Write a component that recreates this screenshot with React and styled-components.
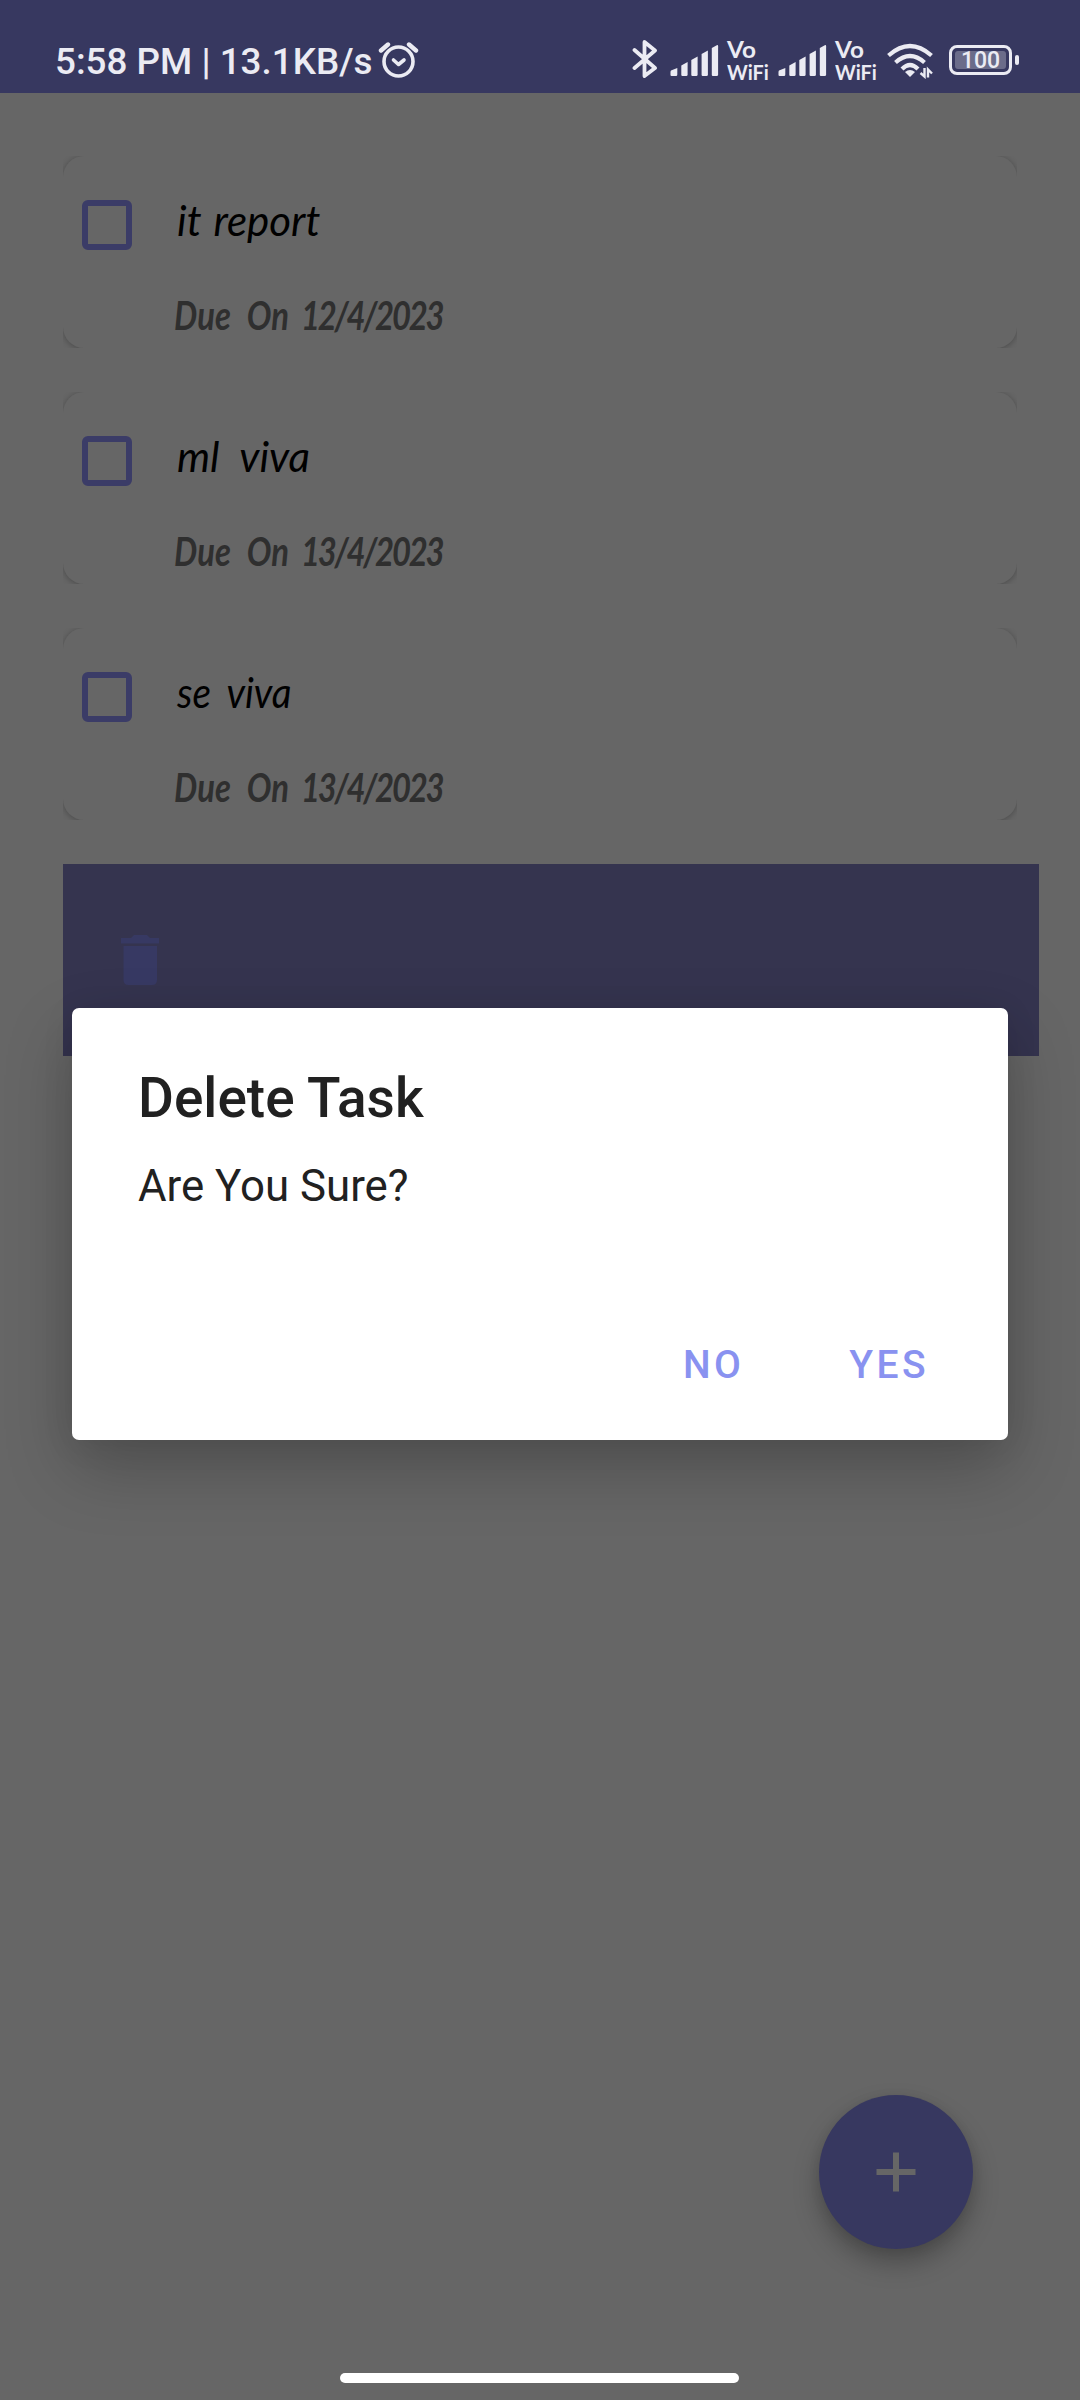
import React from "react";
import styled, { createGlobalStyle } from "styled-components";

const Global = createGlobalStyle`
  * { box-sizing: border-box; }
  body { margin: 0; background: #666666; font-family: Roboto, "Liberation Sans", sans-serif; }
`;

const Screen = styled.div`
  width: 1080px;
  height: 2400px;
  overflow: hidden;
  position: relative;
  display: flex;
  flex-direction: column;
  background: #666666;
`;

const StatusBar = styled.header`
  height: 93px;
  flex: none;
  display: flex;
  justify-content: space-between;
  padding: 34px 61px 0 55px;
  background: #373860;
  color: #ebebf3;
`;

const StatusGroup = styled.div`
  display: flex;
  align-items: flex-start;
  height: 50px;
`;

const Clock = styled.span`
  font-size: 36.8px;
  line-height: 56px;
  font-weight: 500;
  white-space: nowrap;
  width: 319px;
`;

const StatusIcon = styled.svg`
  flex: none;
  display: block;
  margin-left: ${(p) => p.$gap || 0}px;
  margin-top: ${(p) => p.$top || 0}px;
`;

const Carrier = styled.div`
  display: flex;
  flex-direction: column;
  flex: none;
  width: 43px;
  margin-left: 8px;
  margin-top: 5px;
  font-family: Lato, sans-serif;
  font-weight: 700;
  line-height: 21.5px;
  white-space: nowrap;
`;

const CarrierLine = styled.span`
  font-size: ${(p) => p.$size}px;
  transform: scaleX(${(p) => p.$stretch});
  transform-origin: 0 50%;
`;

const Battery = styled.div`
  flex: none;
  width: 63px;
  height: 30px;
  margin: 11px 0 0 16px;
  padding: 3px;
  border: 3px solid #ebebf3;
  border-radius: 8px;
  display: flex;
`;

const Charge = styled.span`
  flex: 1;
  display: flex;
  align-items: center;
  justify-content: center;
  padding-top: 2px;
  border-radius: 3px;
  background: #6b6c8a;
  font-size: 23px;
  font-weight: 500;
  line-height: 18px;
`;

const BatteryTip = styled.span`
  flex: none;
  width: 4px;
  height: 10px;
  margin: 21px 0 0 3px;
  border-radius: 2px;
  background: #ebebf3;
`;

const TaskList = styled.main`
  display: flex;
  flex-direction: column;
  gap: 44px;
  padding: 63px 0 0 63px;
`;

const CardClip = styled.article`
  width: 954px;
  height: 192px;
  overflow: hidden;
`;

const Card = styled.div`
  height: 192px;
  border-radius: 21px;
  background: #666666;
  box-shadow: 0 1px 6px rgba(0, 0, 0, 0.27);
  display: flex;
  padding: 44px 19px 0;
`;

const Checkbox = styled.span`
  flex: none;
  width: 50px;
  height: 50px;
  border: 6px solid #3b3c67;
  border-radius: 6px;
`;

const TaskText = styled.div`
  display: flex;
  flex-direction: column;
  margin-left: 43px;
`;

const TaskName = styled.span`
  height: 54px;
  margin-left: 2px;
  margin-top: -7px;
  font-family: Lato, sans-serif;
  font-style: italic;
  font-size: 42px;
  line-height: 54px;
  color: #000;
  white-space: nowrap;
  word-spacing: ${(p) => p.$space}px;
  transform: scaleX(${(p) => p.$stretch});
  transform-origin: 0 50%;
`;

const DueDate = styled.span`
  height: 50px;
  margin-top: 43px;
  margin-left: -1px;
  font-family: Lato, sans-serif;
  font-style: italic;
  font-weight: 700;
  font-size: 41px;
  line-height: 50px;
  color: #2f2f2f;
  white-space: nowrap;
  word-spacing: 11px;
  transform: scaleX(0.8);
  transform-origin: 0 50%;
`;

const DateDigits = styled.span`
  margin-left: -5px;
  letter-spacing: -2.8px;
`;

const SwipeRow = styled.div`
  width: 976px;
  height: 192px;
  padding: 71px 0 0 58px;
  background: #35344f;
`;

const Fab = styled.button`
  position: absolute;
  left: 819px;
  top: 2095px;
  width: 154px;
  height: 154px;
  border: 0;
  border-radius: 50%;
  display: flex;
  align-items: center;
  justify-content: center;
  background: #373860;
  box-shadow: 0 14px 26px rgba(0, 0, 0, 0.27), 0 2px 12px rgba(0, 0, 0, 0.08);
`;

const Dialog = styled.section`
  position: absolute;
  left: 72px;
  top: 1008px;
  width: 936px;
  height: 432px;
  border-radius: 7px;
  display: flex;
  flex-direction: column;
  background: #fff;
  color: #212121;
  box-shadow: 0 28px 68px rgba(0, 0, 0, 0.23), 0 4px 34px rgba(0, 0, 0, 0.07);
`;

const DialogTitle = styled.h2`
  margin: 57px 0 0 66px;
  font-size: 55px;
  line-height: 66px;
  font-weight: 500;
`;

const Message = styled.p`
  margin: 27px 0 0 66px;
  font-size: 43.8px;
  line-height: 56px;
`;

const Actions = styled.div`
  display: flex;
  justify-content: flex-end;
  gap: 105px;
  margin-top: 126px;
  padding-right: 79px;
`;

const Action = styled.button`
  border: 0;
  padding: 0;
  background: none;
  color: #8992f0;
  font: 500 39px/50px Roboto, sans-serif;
  letter-spacing: 3.4px;
`;

const HomeBar = styled.div`
  position: absolute;
  left: 340px;
  top: 2373px;
  width: 399px;
  height: 10px;
  border-radius: 5px;
  background: #fff;
`;

function Alarm() {
  return (
    <StatusIcon $top={7} $gap={4} width="42" height="38" viewBox="0 0 42 38" fill="none" stroke="#ebebf3" strokeLinecap="round">
      <circle cx="20.5" cy="20.5" r="14.5" strokeWidth="3.6" />
      <path d="M3 9.5L10 3.5M31 3.5L38 9.5" strokeWidth="4.4" />
      <path d="M15.5 19L20.5 23.5L26 19" strokeWidth="3.6" strokeLinejoin="round" />
    </StatusIcon>
  );
}

function Bluetooth() {
  return (
    <StatusIcon $top={5} width="26" height="41" viewBox="0 0 26 41" fill="none" stroke="#ebebf3" strokeWidth="3.8" strokeLinecap="round" strokeLinejoin="round">
      <path d="M2.5 11L23 29L12.5 37V3L23 11.5L2.5 29" />
    </StatusIcon>
  );
}

function Signal({ gap }) {
  return (
    <StatusIcon $gap={gap} $top={11} width="49" height="31" viewBox="0 0 49 31" fill="#ebebf3">
      <path d="M1 25.5L7.3 23V29.5Q7.3 31 6 31H1.5Q.5 31 .5 30V27Q.5 26 1 25.5Z" />
      <path d="M11.3 20.5L17.6 17V29.5Q17.6 31 16.3 31H12.3Q11.3 31 11.3 29.5Z" />
      <path d="M21.3 15L27.6 11.5V29.5Q27.6 31 26.3 31H22.3Q21.3 31 21.3 29.5Z" />
      <path d="M31.6 9L37.9 5.5V29.5Q37.9 31 36.6 31H32.6Q31.6 31 31.6 29.5Z" />
      <path d="M41.8 3L46.8 .2Q48.1 -.3 48.1 1.2V29.5Q48.1 31 46.8 31H42.8Q41.8 31 41.8 29.5Z" />
    </StatusIcon>
  );
}

function VoWifi() {
  return (
    <Carrier>
      <CarrierLine $size={22.5} $stretch={1.08}>Vo</CarrierLine>
      <CarrierLine $size={21} $stretch={0.94}>WiFi</CarrierLine>
    </Carrier>
  );
}

function Wifi() {
  return (
    <StatusIcon $gap={9} $top={9} width="46" height="36" viewBox="0 0 46 36" fill="none" stroke="#ebebf3" strokeWidth="4.2">
      <path d="M1.500 12.500Q23 -6.500 44.500 12.500M8.500 19.500Q23 6.500 37.500 19.500M15 26Q23 18 31 26" />
      <path d="M18 29Q23 25 28 29L23 34Z" fill="#ebebf3" stroke="none" />
      <path d="M37.500 25V33.500L33.500 30M41 34.500V26.500L45 30.500" strokeWidth="2.400" />
    </StatusIcon>
  );
}

const tasks = [
  { name: "it report", due: "12/4/2023", stretch: 1, space: 2 },
  { name: "ml viva", due: "13/4/2023", stretch: 1, space: 11 },
  { name: "se viva", due: "13/4/2023", stretch: 0.92, space: 8 },
];

export default function App() {
  return (
    <Screen>
      <Global />
      <StatusBar>
        <StatusGroup>
          <Clock>5:58 PM | 13.1KB/s</Clock>
          <Alarm />
        </StatusGroup>
        <StatusGroup>
          <Bluetooth />
          <Signal gap={12} />
          <VoWifi />
          <Signal gap={8} />
          <VoWifi />
          <Wifi />
          <Battery><Charge>100</Charge></Battery>
          <BatteryTip />
        </StatusGroup>
      </StatusBar>
      <TaskList>
        {tasks.map((t) => (
          <CardClip key={t.name}>
            <Card>
              <Checkbox />
              <TaskText>
                <TaskName $stretch={t.stretch} $space={t.space}>{t.name}</TaskName>
                <DueDate>Due On <DateDigits>{t.due}</DateDigits></DueDate>
              </TaskText>
            </Card>
          </CardClip>
        ))}
        <SwipeRow>
          <svg width="38" height="50" viewBox="0 0 38 50" fill="#373963">
            <path d="M0 3H10L13 0H26L29 3H38V8.500H0ZM2.500 11H36V45Q36 50 31 50H7.500Q2.500 50 2.500 45Z" />
          </svg>
        </SwipeRow>
      </TaskList>
      <Fab aria-label="Add task">
        <svg width="40" height="40" viewBox="0 0 40 40" stroke="#666" strokeWidth="6">
          <path d="M20 .5V39.500M.5 20H39.500" />
        </svg>
      </Fab>
      <Dialog role="dialog">
        <DialogTitle>Delete Task</DialogTitle>
        <Message>Are You Sure?</Message>
        <Actions>
          <Action>NO</Action>
          <Action>YES</Action>
        </Actions>
      </Dialog>
      <HomeBar />
    </Screen>
  );
}
